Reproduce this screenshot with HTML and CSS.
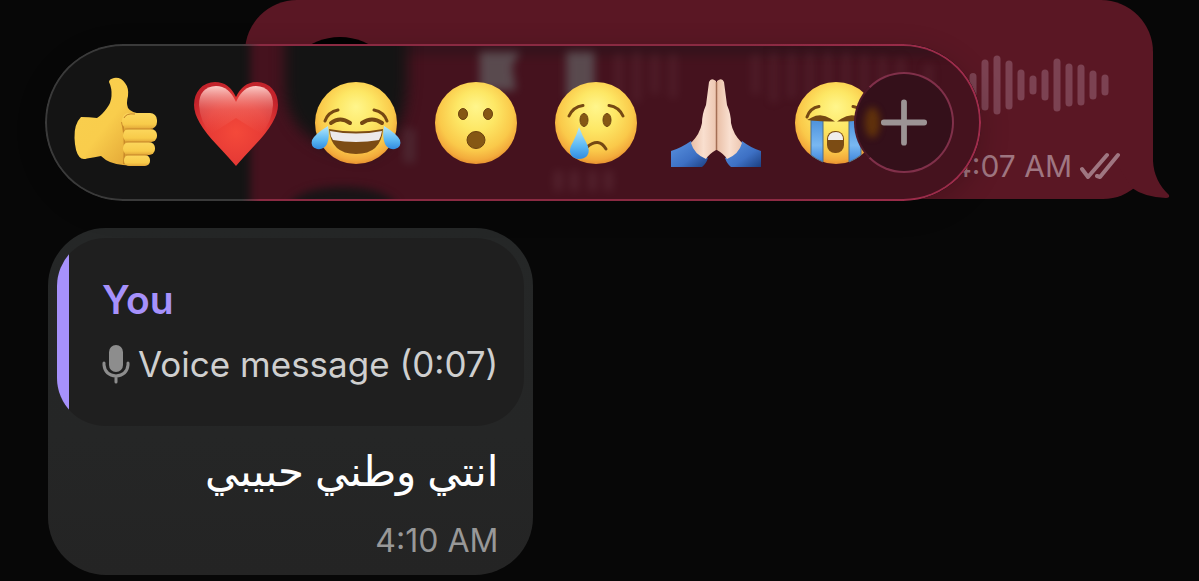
FILE: index.html
```html
<!DOCTYPE html>
<html lang="en">
<head>
    <meta charset="UTF-8">
    <meta name="viewport" content="width=device-width, initial-scale=1.0">
    <title>Chat</title>
    <link rel="stylesheet" href="styles.css">
</head>
<body>
    <svg class="defs" aria-hidden="true">
        <defs>
            <radialGradient id="face" cx="50%" cy="42%" r="60%" fy="30%">
                <stop offset="0" stop-color="#fff68c"/>
                <stop offset="0.4" stop-color="#fde765"/>
                <stop offset="0.75" stop-color="#fac94a"/>
                <stop offset="0.9" stop-color="#f3ac3c"/>
                <stop offset="1" stop-color="#e3892c"/>
            </radialGradient>
            <linearGradient id="tear" x1="0" y1="0" x2="0" y2="1">
                <stop offset="0" stop-color="#b5e8fb"/>
                <stop offset="0.6" stop-color="#5cb8f3"/>
                <stop offset="1" stop-color="#318be0"/>
            </linearGradient>
            <linearGradient id="stream" x1="0" y1="0" x2="0" y2="1">
                <stop offset="0" stop-color="#4d92dc"/>
                <stop offset="0.6" stop-color="#79b8f2"/>
                <stop offset="1" stop-color="#3f86db"/>
            </linearGradient>
            <radialGradient id="heart" cx="50%" cy="60%" r="60%">
                <stop offset="0" stop-color="#f4493a"/>
                <stop offset="0.6" stop-color="#e63a35"/>
                <stop offset="1" stop-color="#c3232b"/>
            </radialGradient>
            <linearGradient id="shine" x1="0" y1="0" x2="0" y2="1">
                <stop offset="0" stop-color="#ffd5d0" stop-opacity="0.95"/>
                <stop offset="0.5" stop-color="#f4837a" stop-opacity="0.4"/>
                <stop offset="1" stop-color="#f06a60" stop-opacity="0"/>
            </linearGradient>
            <linearGradient id="thumb" x1="0" y1="0" x2="1" y2="1">
                <stop offset="0" stop-color="#f9cf4e"/>
                <stop offset="0.5" stop-color="#f9cd4c"/>
                <stop offset="1" stop-color="#dd9c30"/>
            </linearGradient>
            <linearGradient id="finger" x1="0" y1="0" x2="0" y2="1">
                <stop offset="0" stop-color="#fcd75c"/>
                <stop offset="0.7" stop-color="#f8cb4a"/>
                <stop offset="1" stop-color="#e2a638"/>
            </linearGradient>
            <linearGradient id="hand" x1="0" y1="0" x2="1" y2="0">
                <stop offset="0" stop-color="#e9bfa6"/>
                <stop offset="0.5" stop-color="#f9dfcf"/>
                <stop offset="1" stop-color="#edc7b1"/>
            </linearGradient>
            <linearGradient id="sleeve" x1="0" y1="0" x2="1" y2="1">
                <stop offset="0" stop-color="#5a93e0"/>
                <stop offset="0.6" stop-color="#3d70c4"/>
                <stop offset="1" stop-color="#1c3f80"/>
            </linearGradient>
            <filter id="soft" x="-30%" y="-30%" width="160%" height="160%" color-interpolation-filters="sRGB">
                <feGaussianBlur stdDeviation="7"/>
            </filter>
            <filter id="haze" x="-40%" y="-40%" width="180%" height="180%" color-interpolation-filters="sRGB">
                <feGaussianBlur stdDeviation="4"/>
            </filter>
        </defs>
    </svg>

    <main class="chat">
        <article class="voice">
            <span class="play"></span>
            <div class="voice-side">
                <svg class="wave" width="140" height="60" viewBox="0 0 140 60" aria-hidden="true">
                    <path d="M4 21.5v17M16 8v44M28 4v52M40 9v42M52 18v24M64 24v12M76 18v24M88 7v46M100 12v36M112 13v34M124 19v22M136 23v14"/>
                </svg>
                <div class="voice-meta">
                    <time>4:07 AM</time>
                    <svg class="ticks" width="40" height="28" viewBox="0 0 40 28" aria-hidden="true">
                        <path d="M2 17l6 8L27 3M17 24l3 1L38 3"/>
                    </svg>
                </div>
            </div>
            <svg class="tail" width="50" height="50" viewBox="0 0 50 50" aria-hidden="true">
                <path d="M33 0v12Q34 32 49 46Q50 49 46 49Q24 48 12 39L0 20V0z"/>
            </svg>
        </article>

        <div class="reactions">
            <svg class="glass" viewBox="0 0 936 156" preserveAspectRatio="xMinYMin slice" aria-hidden="true">
                <rect width="936" height="156" fill="#141414"/>
                <rect x="204" y="-140" width="1000" height="440" fill="#45121e" filter="url(#haze)"/>
                <rect x="350" y="-12" width="590" height="24" fill="#1c1418" opacity="0.35" filter="url(#haze)"/>
                <path d="M238 -40H360V40Q358 98 316 112Q238 100 238 40z" fill="#141414" filter="url(#soft)"/>
                <ellipse cx="296" cy="164" rx="54" ry="22" fill="#181416" filter="url(#haze)"/>
                <rect x="356" y="84" width="12" height="34" fill="#5b4a50" opacity="0.35" filter="url(#haze)"/>
                <path d="M432 8h40l-8 14 4 24h-36z" fill="#5f585b" opacity="0.8" filter="url(#haze)"/>
                <rect x="518" y="8" width="28" height="46" fill="#5f585b" opacity="0.8" filter="url(#haze)"/>
                <path d="M570 10v50M588 8v50M606 10v40M624 10v44M706 10v40M724 8v50M742 8v46M760 8v50M778 8v46M796 8v50M814 10v40M832 12v34M850 14v26M878 20v24" stroke="#6a3a46" stroke-width="8" opacity="0.28" filter="url(#haze)"/>
                <path d="M510 126v20M526 126v20M544 126v20M560 126v20" stroke="#70424d" stroke-width="8" opacity="0.35" filter="url(#haze)"/>
            </svg>

            <button class="reaction" aria-label="Thumbs up">
                <svg viewBox="0 0 90 90">
                    <path d="M10 39Q3 46 3.500 60Q4 74 8.500 79Q11 82 16 80.500Q24 79 30 78Q38 86 52 87Q66 89 70 86L72 36Q60 35 57 30Q55 25 57 18Q58 10 54 5Q50 -1 43 0Q38 1 38 4Q41 10 40.500 18Q40 25 36 30Q31 37 26 40Q18 39 10 39z" fill="url(#thumb)"/>
                    <path d="M51 44Q55 58 53 86" fill="none" stroke="#c98a29" stroke-width="2"/>
                    <rect x="51" y="35" width="35" height="16" rx="7" fill="url(#finger)"/>
                    <rect x="52" y="51" width="34" height="13" rx="6" fill="url(#finger)"/>
                    <rect x="52" y="64" width="32" height="13" rx="6" fill="url(#finger)"/>
                    <rect x="53" y="77" width="26" height="11" rx="5" fill="url(#finger)"/>
                    <path d="M54 51H82M55 64H80M55 77H77M53 40Q55 35 64 36" fill="none" stroke="#c58428" stroke-width="1"/>
                </svg>
            </button>
            <button class="reaction" aria-label="Heart">
                <svg viewBox="0 0 90 90">
                    <path d="M45 88Q40 82 26 67Q3 43 3 27Q3 17 9 10.500Q15 4 24 4Q38 4 45 19Q52 4 66 4Q75 4 81 10.500Q87 17 87 27Q87 43 64 67Q50 82 45 88z" fill="url(#heart)"/>
                    <path d="M45 24Q38 8 25 8Q8 9 8 27Q9 44 20 56L45 40z" fill="url(#shine)"/>
                    <path d="M45 24Q52 8 65 8Q82 9 82 27Q81 44 70 56L45 40z" fill="url(#shine)"/>
                </svg>
            </button>
            <button class="reaction" aria-label="Tears of joy">
                <svg viewBox="0 0 90 90">
                    <circle cx="45" cy="45" r="41" fill="url(#face)"/>
                    <path d="M14 43Q17 34 27 32M76 43Q73 34 63 32" class="line"/>
                    <path d="M20 45Q29 38 39 45M51 45Q61 38 71 45" class="line thick"/>
                    <path d="M18 51Q45 56 72 51Q70 76 45 76Q20 76 18 51z" fill="#7c4c14"/>
                    <path d="M19 53Q45 58 71 53Q70 59 68 62Q45 66 22 62Q19 58 19 53z" fill="#ece9ea"/>
                    <path d="M17 48Q19 59 16 66Q13 72 6 71Q-1 69 1 62Q4 56 17 48z" fill="url(#tear)"/>
                    <path d="M73 48Q71 59 74 66Q77 72 84 71Q91 69 89 62Q86 56 73 48z" fill="url(#tear)"/>
                </svg>
            </button>
            <button class="reaction" aria-label="Surprised">
                <svg viewBox="0 0 90 90">
                    <circle cx="45" cy="45" r="41" fill="url(#face)"/>
                    <g fill="#855714" stroke="#6c420f">
                        <ellipse cx="32" cy="36" rx="4.500" ry="5.500"/>
                        <ellipse cx="57" cy="36" rx="4.500" ry="5.500"/>
                        <ellipse cx="45" cy="62" rx="9" ry="8.500"/>
                    </g>
                </svg>
            </button>
            <button class="reaction" aria-label="Crying">
                <svg viewBox="0 0 90 90">
                    <circle cx="45" cy="45" r="41" fill="url(#face)"/>
                    <path d="M18 38Q22 29 32 27.500M72 38Q68 29 58 27.500" class="line"/>
                    <path d="M36 69Q48 59 55 71" class="line"/>
                    <g fill="#855714" stroke="#6c420f">
                        <ellipse cx="33" cy="42" rx="4" ry="6.500"/>
                        <ellipse cx="56" cy="42" rx="4" ry="6.500"/>
                    </g>
                    <path d="M28 49Q31 57 35 64Q40 73 36 78Q33 81 28 81Q23 81 20 77Q17 72 22 64Q26 56 28 49z" fill="url(#tear)"/>
                </svg>
            </button>
            <button class="reaction" aria-label="Folded hands">
                <svg viewBox="0 0 90 90">
                    <path d="M0 73Q10 70 20 63Q24 74 37 80Q35 86 31 89H0z" fill="url(#sleeve)"/>
                    <path d="M90 73Q80 70 71 63Q67 74 54 80Q56 86 60 89H90z" fill="url(#sleeve)"/>
                    <path d="M45 3Q40 -1 38 4L35 27Q31 36 31 45Q29 56 20 65Q23 76 35 81Q38 76 45 72z" fill="url(#hand)"/>
                    <path d="M46 3Q51 -1 53 4L56 27Q60 36 60 45Q62 56 71 65Q68 76 56 81Q53 76 46 72z" fill="url(#hand)"/>
                    <path d="M45.500 4V72" stroke="#a46f55" stroke-width="1.500"/>
                </svg>
            </button>
            <button class="reaction" aria-label="Sobbing">
                <svg viewBox="0 0 90 90">
                    <circle cx="45" cy="45" r="41" fill="url(#face)"/>
                    <path d="M16 39Q19 30 28 28.500M74 39Q71 30 62 28.500" class="line"/>
                    <path d="M20 42H32V84Q25 81 20 77zM58 42H70V77Q65 81 58 84z" fill="url(#stream)" stroke="#4d6f8a"/>
                    <path d="M21 41Q30 36 39 42Q30 42 21 41zM51 42Q60 36 69 41Q60 42 51 42z" class="line"/>
                    <rect x="36" y="53" width="17" height="22" rx="8" fill="#7c4c14"/>
                    <path d="M37 62Q37 54 45 54Q52 54 52 62z" fill="#f0eeee"/>
                </svg>
            </button>
            <button class="more" aria-label="More reactions">
                <svg viewBox="0 0 100 100">
                    <ellipse cx="17" cy="50" rx="8" ry="16" fill="#6b3a08" opacity="0.8" filter="url(#haze)"/>
                    <path d="M50 29v42M29 50h42" stroke="#9c9495" stroke-width="6" stroke-linecap="round"/>
                </svg>
            </button>
        </div>

        <article class="message">
            <blockquote class="quote">
                <strong class="quote-name">You</strong>
                <span class="quote-text">
                    <svg width="28" height="40" viewBox="0 0 28 40" aria-hidden="true">
                        <rect x="7" y="1" width="14" height="27" rx="7" fill="#8d8d8d"/>
                        <path d="M2 19v2Q3 31 14 32Q25 31 26 21v-2M14 32v6" fill="none" stroke="#8d8d8d" stroke-width="3" stroke-linecap="round"/>
                    </svg>
                    Voice message (0:07)
                </span>
            </blockquote>
            <p class="text" lang="ar" dir="rtl">انتي وطني حبيبي</p>
            <time class="time">4:10 AM</time>
        </article>
    </main>
</body>
</html>
```

FILE: styles.css
```css
* {
    box-sizing: border-box;
}

body {
    margin: 0;
    min-height: 100vh;
    background: #070707;
    color: white;
    font-family: Inter, "Liberation Sans", sans-serif;
}

button {
    padding: 0;
    border: none;
    background: none;
    cursor: pointer;
}

.defs {
    position: absolute;
    width: 0;
    height: 0;
}

.chat {
    position: relative;
    padding: 0 46px 5px 48px;
}

/* outgoing voice message */
.voice {
    position: relative;
    display: flex;
    justify-content: space-between;
    margin-left: 197px;
    padding: 37px 33px 14px 35px;
    border-radius: 52px 52px 50px 50px;
    background: #5a1724;
}

.play {
    width: 120px;
    height: 120px;
    border-radius: 50%;
    background: black;
}

.voice-side {
    display: flex;
    flex-direction: column;
    align-items: flex-end;
    gap: 32px;
    padding-top: 18px;
}

.wave {
    margin-right: 11px;
    fill: none;
    stroke: #7c4252;
    stroke-width: 7;
    stroke-linecap: round;
}

.voice-meta {
    display: flex;
    align-items: center;
    gap: 8px;
    color: #9f7681;
    font-size: 30px;
    line-height: 38px;
}

.ticks {
    fill: none;
    stroke: #9f7681;
    stroke-width: 4;
    stroke-linecap: round;
    stroke-linejoin: round;
}

.tail {
    position: absolute;
    right: -17px;
    bottom: 0;
    fill: #5a1724;
}

/* reaction picker */
.reactions {
    position: absolute;
    top: 44px;
    left: 45px;
    right: 218px;
    display: flex;
    align-items: center;
    gap: 30px;
    height: 157px;
    padding-left: 26px;
    border-radius: 78px;
    box-shadow: 0 8px 30px rgba(0, 0, 0, 0.2);
}

.glass {
    position: absolute;
    top: 0;
    left: 0;
    width: 100%;
    height: 100%;
    border-radius: 78px;
}

.reactions::after {
    content: "";
    position: absolute;
    inset: 0;
    padding: 2px;
    border-radius: 78px;
    background: linear-gradient(90deg, #3a3a3a 21%, #8a2a42 23%, #8a2a42 75%, #a02c4c);
    mask: linear-gradient(black 0 0) content-box exclude, linear-gradient(black 0 0);
    pointer-events: none;
}

.reaction {
    position: relative;
    flex: 0 0 90px;
    height: 90px;
}

.reaction svg,
.more svg {
    display: block;
    width: 100%;
    height: 100%;
    overflow: visible;
}

.line {
    fill: none;
    stroke: #754813;
    stroke-width: 3;
    stroke-linecap: round;
}

.thick {
    stroke-width: 4;
}

.more {
    position: absolute;
    top: 28px;
    right: 27px;
    width: 100px;
    height: 101px;
    border: 2px solid #80304a;
    border-left-color: #4c1928;
    border-radius: 50%;
    background: #34101a;
    overflow: hidden;
}

/* incoming reply */
.message {
    display: flex;
    flex-direction: column;
    width: fit-content;
    margin-top: 29px;
    padding: 10px 9px 14px;
    border-radius: 58px;
    background: linear-gradient(#252727, #252626 60%, #242424);
}

.quote {
    display: flex;
    flex-direction: column;
    gap: 16px;
    margin: 0;
    padding: 38px 26px 38px 45px;
    border-radius: 48px;
    background: linear-gradient(90deg, #a691fb 12px, #1f1f1f 12px);
}

.quote-name {
    color: #a691fb;
    font-size: 39px;
    font-weight: 600;
    line-height: 48px;
}

.quote-text {
    display: flex;
    align-items: center;
    gap: 8px;
    color: #cfcfcf;
    font-size: 35px;
    line-height: 48px;
    white-space: nowrap;
}

.text {
    margin: 10px 26px 0;
    font-family: "Noto Sans", "DejaVu Sans", sans-serif;
    font-size: 42px;
    line-height: 68px;
}

.time {
    margin: 17px 26px 0;
    color: #989898;
    font-size: 32px;
    line-height: 40px;
    text-align: right;
}
```
